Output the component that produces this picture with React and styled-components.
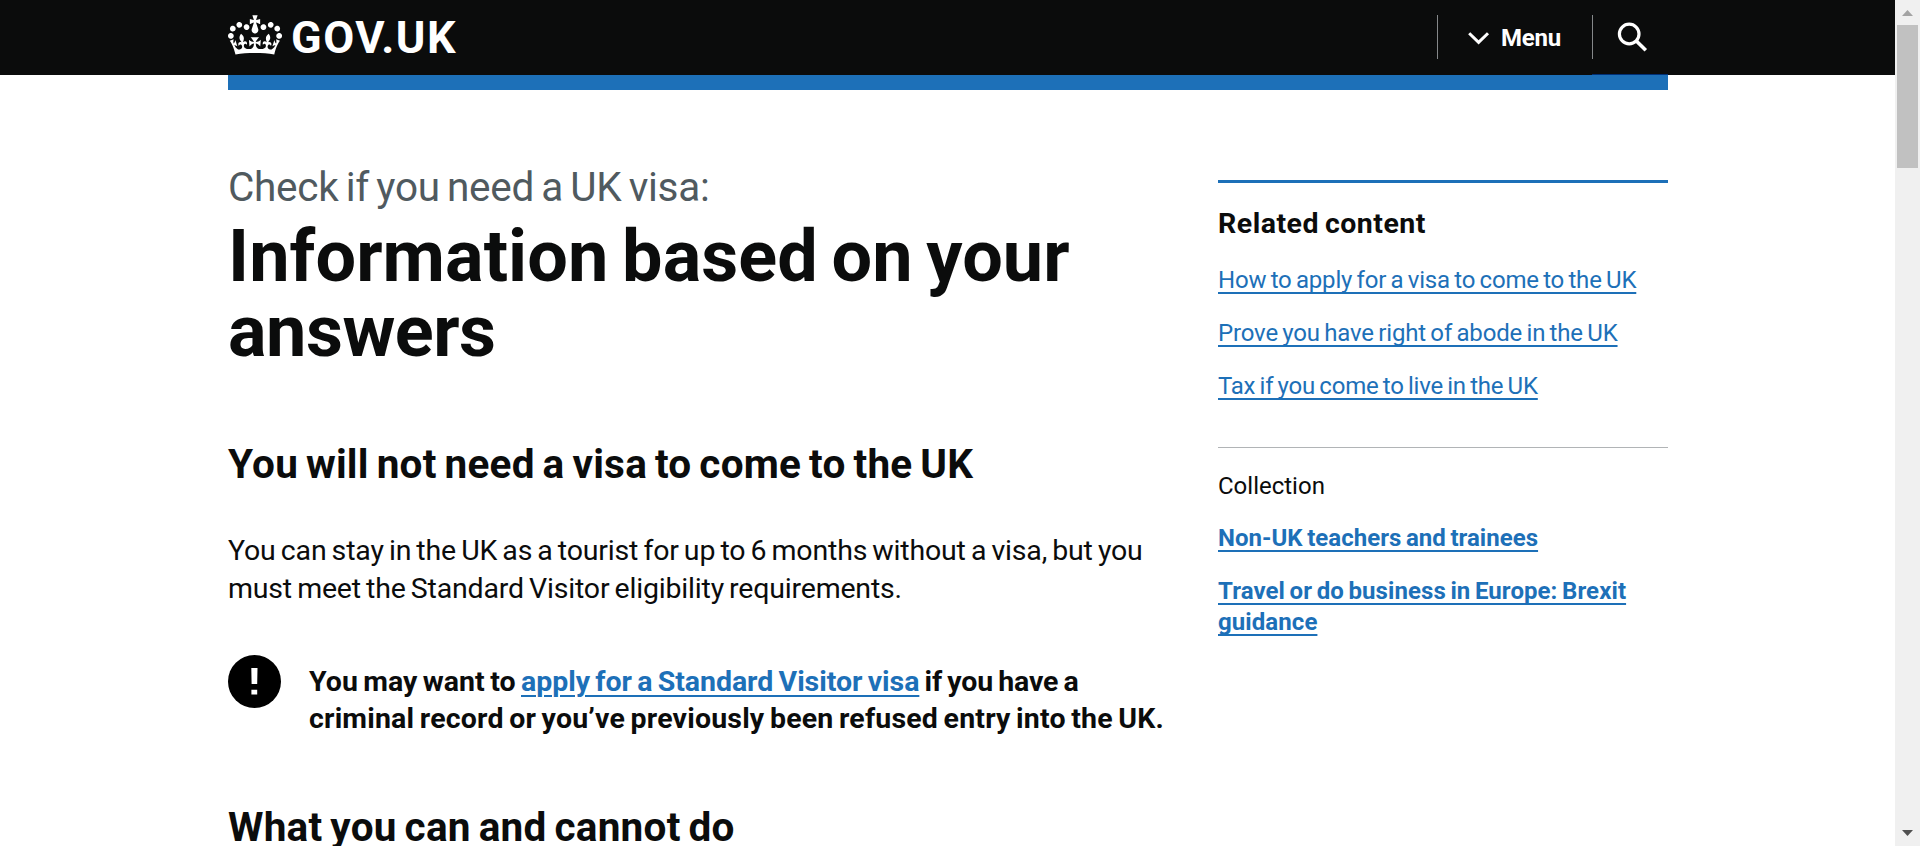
import React from 'react';
import styled, { createGlobalStyle } from 'styled-components';

const ink = '#0b0c0c';
const blue = '#1d70b8';

const GlobalStyle = createGlobalStyle`
  * { box-sizing: border-box; }
  body {
    margin: 0;
    background: #fff;
    color: ${ink};
    font-family: Roboto, "Liberation Sans", sans-serif;
    overflow: hidden;
  }
  h1, h2, p, ul { margin: 0; padding: 0; font-weight: inherit; word-spacing: -0.06em; }
`;

const Screen = styled.div`
  display: flex;
  height: 846px;
  overflow: hidden;
`;

const Page = styled.div`
  flex: 1;
  min-width: 0;
`;

const Container = styled.div`
  width: 1440px;
  margin-left: 228px;
`;

const Header = styled.header`
  height: 75px;
  background: ${ink};
  color: #fff;
`;

const HeaderRow = styled(Container)`
  display: flex;
  justify-content: space-between;
  height: 75px;
`;

const Brand = styled.a`
  display: flex;
  align-items: flex-start;
  gap: 9px;
  padding-top: 15px;
`;

const Crown = styled.svg`
  width: 54px;
  height: 40px;
  fill: #fff;
`;

const BrandName = styled.span`
  font-size: 45px;
  line-height: 46px;
  font-weight: 700;
  letter-spacing: 1.5px;
`;

const Nav = styled.nav`
  display: flex;
  padding-top: 15px;
`;

const NavButton = styled.div`
  display: flex;
  align-items: center;
  height: 44px;
  width: ${(p) => p.$width}px;
  padding-left: ${(p) => p.$pad}px;
  border-left: 1px solid #85888a;
`;

const MenuLabel = styled.span`
  margin-left: 11px;
  padding-top: 2px;
  font-size: 24px;
  line-height: 30px;
  font-weight: 700;
  letter-spacing: -0.2px;
`;

const SearchCell = styled.div`
  height: 60px;
  border-bottom: 1px solid #003078;
`;

const BlueBar = styled(Container)`
  height: 15px;
  background: ${blue};
`;

const Columns = styled(Container)`
  display: grid;
  grid-template-columns: 960px 450px;
  gap: 30px;
`;

const Main = styled.main`
  padding-top: 75px;
`;

const Line = styled.span`
  display: block;
  white-space: nowrap;
  letter-spacing: ${(p) => p.$track || 0}px;
`;

const Run = styled.span`
  letter-spacing: ${(p) => p.$track || 0}px;
`;

const Caption = styled.p`
  color: #505a5f;
  font-size: 40.5px;
  line-height: 45px;
`;

const Title = styled.h1`
  margin-top: 9px;
  font-size: 72px;
  line-height: 75px;
  font-weight: 700;
`;

const SectionHeading = styled.h2`
  margin-top: ${(p) => p.$gap}px;
  font-size: 40.5px;
  line-height: 45px;
  font-weight: 700;
`;

const Paragraph = styled.p`
  margin-top: 45px;
  font-size: 28.5px;
  line-height: 37.5px;
`;

const Warning = styled.div`
  display: flex;
  gap: 28px;
  margin-top: 48px;
`;

const WarningIcon = styled.svg`
  width: 53px;
  height: 53px;
  flex: none;
`;

const WarningText = styled.p`
  padding-top: 8px;
  font-size: 28.5px;
  line-height: 37px;
  font-weight: 700;
`;

const Link = styled.a`
  color: ${blue};
  letter-spacing: ${(p) => p.$track || 0}px;
  text-decoration: underline;
  text-decoration-thickness: 2px;
  text-underline-offset: 4px;
  text-decoration-skip-ink: ${(p) => (p.$solid ? 'none' : 'auto')};
`;

const Sidebar = styled.aside`
  align-self: start;
  margin-top: 90px;
  border-top: 3px solid ${blue};
`;

const RelatedHeading = styled.h2`
  margin-top: 22px;
  font-size: 28.5px;
  line-height: 38px;
  font-weight: 700;
  letter-spacing: 0.5px;
`;

const LinkList = styled.ul`
  display: flex;
  flex-direction: column;
  gap: 22px;
  margin-top: ${(p) => p.$gap}px;
  list-style: none;
  font-size: 24px;
  line-height: 31px;
  font-weight: ${(p) => (p.$bold ? 700 : 400)};
`;

const Collection = styled.section`
  margin-top: 45px;
  padding-top: 23px;
  border-top: 1px solid #b1b4b6;
`;

const CollectionLabel = styled.h2`
  font-size: 24px;
  line-height: 31px;
  font-weight: 400;
`;

const Scrollbar = styled.div`
  display: flex;
  flex-direction: column;
  align-items: center;
  width: 25px;
  background: #f0f0f0;
`;

const Thumb = styled.div`
  width: 21px;
  height: 143px;
  background: #c1c1c1;
`;

const ArrowCell = styled.svg`
  width: 25px;
  height: 25px;
  margin-top: ${(p) => (p.$bottom ? 'auto' : '0')};
  fill: ${(p) => (p.$bottom ? '#505050' : '#a3a3a3')};
`;

const related = [
  ['How to apply for a visa to come to the UK', -0.18],
  ['Prove you have right of abode in the UK', -0.16],
  ['Tax if you come to live in the UK', -0.22],
];

export default function App() {
  return (
    <>
      <GlobalStyle />
      <Screen>
        <Page>
          <Header>
            <HeaderRow>
              <Brand>
                <Crown viewBox="0 0 132 97">
                  <path d="M25 30.2c3.5 1.5 7.7-.2 9.1-3.7 1.5-3.6-.2-7.8-3.9-9.2-3.6-1.4-7.6.3-9.1 3.9-1.4 3.5.3 7.5 3.9 9zM9 39.5c3.6 1.5 7.8-.2 9.2-3.7 1.5-3.6-.2-7.8-3.9-9.1-3.6-1.5-7.6.2-9.1 3.8-1.4 3.5.3 7.5 3.8 9zM4.4 57.2c3.5 1.5 7.7-.2 9.1-3.8 1.5-3.6-.2-7.7-3.9-9.1-3.5-1.5-7.6.3-9.1 3.8-1.4 3.5.3 7.6 3.9 9.1zm38.3-21.4c3.5 1.5 7.7-.2 9.1-3.8 1.5-3.6-.2-7.7-3.9-9.1-3.6-1.5-7.6.3-9.1 3.8-1.3 3.6.4 7.7 3.9 9.1zm64.4-5.6c-3.6 1.5-7.8-.2-9.1-3.7-1.5-3.6.2-7.8 3.8-9.2 3.6-1.4 7.7.3 9.2 3.9 1.3 3.5-.4 7.5-3.9 9zm15.9 9.3c-3.6 1.5-7.7-.2-9.1-3.7-1.5-3.6.2-7.8 3.7-9.1 3.6-1.5 7.7.2 9.2 3.8 1.5 3.5-.3 7.5-3.8 9zm4.7 17.7c-3.6 1.5-7.8-.2-9.2-3.8-1.5-3.6.2-7.7 3.9-9.1 3.6-1.5 7.7.3 9.2 3.8 1.3 3.5-.4 7.6-3.9 9.1zM89.3 35.8c-3.6 1.5-7.8-.2-9.2-3.8-1.4-3.6.2-7.7 3.9-9.1 3.6-1.5 7.7.3 9.2 3.8 1.4 3.6-.3 7.7-3.9 9.1zM69.7 17.7l8.9 4.7V9.3l-8.9 2.8c-.2-.3-.5-.6-.9-.9L72.4 0H59.6l3.5 11.2c-.3.3-.6.5-.9.9l-8.8-2.8v13.1l8.8-4.7c.3.3.6.7.9.9l-5 15.4v.1c-.2.8-.4 1.6-.4 2.4 0 4.1 3.1 7.5 7 8.1h.2c.3 0 .7.1 1 .1.4 0 .7 0 1-.1h.2c4-.6 7.1-4.1 7.1-8.1 0-.8-.1-1.7-.4-2.4V34l-5.1-15.4c.4-.2.7-.6 1-.9zM66 92.8c16.9 0 32.8 1.1 47.1 3.2 4-16.9 8.9-26.7 14-33.5l-9.6-3.4c1 4.9 1.1 7.2 0 10.2-1.5-1.4-3-4.3-4.2-8.7L108.6 76c2.8-2 5-3.2 7.5-3.3-4.4 9.4-10 11.9-13.6 11.2-4.3-.8-6.3-4.6-5.6-7.9 1-4.7 5.7-5.9 8-.5 4.3-8.7-3-11.4-7.6-8.8 7.1-7.2 7.9-13.5 2.1-21.1-8 6.1-8.1 12.3-4.5 20.8-4.7-5.4-12.1-2.5-9.5 6.2 3.4-5.2 7.9-2 7.2 3.1-.6 4.3-6.4 7.8-13.5 7.2-10.3-.9-10.9-8-11.2-13.8 2.5-.5 7.1 1.8 11 7.3L80.2 60c-4.1 4.4-8 5.3-12.3 5.4 1.4-4.4 8-11.6 8-11.6H55.5s6.4 7.2 7.9 11.6c-4.2-.1-8-1-12.3-5.4l1.4 16.4c3.9-5.5 8.5-7.7 10.9-7.3-.3 5.8-.9 12.8-11.1 13.8-7.2.6-12.9-2.9-13.5-7.2-.7-5 3.8-8.3 7.1-3.1 2.7-8.7-4.6-11.6-9.4-6.2 3.7-8.5 3.6-14.7-4.6-20.8-5.8 7.6-5 13.9 2.2 21.1-4.7-2.6-11.9.1-7.7 8.8 2.3-5.5 7.1-4.2 8.1.5.7 3.3-1.3 7.1-5.7 7.9-3.5.7-9-1.8-13.5-11.2 2.5.1 4.7 1.3 7.5 3.3l-4.7-15.4c-1.2 4.4-2.7 7.2-4.3 8.7-1.1-3-.9-5.3 0-10.2l-9.5 3.4c5 6.9 9.9 16.7 14 33.5 14.8-2.1 30.8-3.2 47.7-3.2z" />
                </Crown>
                <BrandName>GOV.UK</BrandName>
              </Brand>
              <Nav>
                <NavButton $width={155} $pad={29}>
                  <svg width="23" height="18" viewBox="0 0 23 18" fill="none" stroke="#fff" strokeWidth="3">
                    <path d="M2.2 5.2l9.4 9.2 9.4-9.2" />
                  </svg>
                  <MenuLabel>Menu</MenuLabel>
                </NavButton>
                <SearchCell>
                  <NavButton $width={76} $pad={24}>
                    <svg width="32" height="32" viewBox="0 0 32 32" fill="none" stroke="#fff">
                      <circle cx="12.2" cy="13" r="9.8" strokeWidth="3.2" />
                      <path d="M18.6 19.2L28.8 29.2" strokeWidth="3.6" />
                    </svg>
                  </NavButton>
                </SearchCell>
              </Nav>
            </HeaderRow>
          </Header>
          <BlueBar />
          <Columns>
            <Main>
              <Caption>
                <Line $track={-0.3}>Check if you need a UK visa:</Line>
              </Caption>
              <Title>
                <Line $track={0.08}>Information based on your</Line>
                <Line $track={-0.5}>answers</Line>
              </Title>
              <SectionHeading $gap={73}>
                <Line $track={0.24}>You will not need a visa to come to the UK</Line>
              </SectionHeading>
              <Paragraph>
                <Line $track={-0.18}>
                  You can stay in the UK as a tourist for up to 6 months without a visa, but you
                </Line>
                <Line $track={-0.19}>must meet the Standard Visitor eligibility requirements.</Line>
              </Paragraph>
              <Warning>
                <WarningIcon viewBox="0 0 53 53">
                  <circle cx="26.5" cy="26.5" r="26.5" fill="#000" />
                  <path d="M23.3 13h6.2l-.3 16h-5.6zM23.4 34.8h5.8v4.8h-5.8z" fill="#fff" />
                </WarningIcon>
                <WarningText>
                  <Line>
                    <Run $track={0.03}>You may want to </Run>
                    <Link $track={-0.05}>apply for a Standard Visitor visa</Link>
                    <Run $track={-0.14}> if you have a</Run>
                  </Line>
                  <Line $track={0.18}>
                    criminal record or you’ve previously been refused entry into the UK.
                  </Line>
                </WarningText>
              </Warning>
              <SectionHeading $gap={68}>
                <Line $track={0.24}>What you can and cannot do</Line>
              </SectionHeading>
            </Main>
            <Sidebar>
              <RelatedHeading>Related content</RelatedHeading>
              <LinkList $gap={22}>
                {related.map(([label, track]) => (
                  <li key={label}>
                    <Link $solid $track={track}>{label}</Link>
                  </li>
                ))}
              </LinkList>
              <Collection>
                <CollectionLabel>Collection</CollectionLabel>
                <LinkList $bold $gap={21}>
                  <li>
                    <Link $solid $track={0.03}>Non-UK teachers and trainees</Link>
                  </li>
                  <li>
                    <Link $solid $track={0.08}>Travel or do business in Europe: Brexit guidance</Link>
                  </li>
                </LinkList>
              </Collection>
            </Sidebar>
          </Columns>
        </Page>
        <Scrollbar>
          <ArrowCell viewBox="0 0 25 25">
            <path d="M7 16h11l-5.5-6z" />
          </ArrowCell>
          <Thumb />
          <ArrowCell $bottom viewBox="0 0 25 25">
            <path d="M7 9h11l-5.5 6z" />
          </ArrowCell>
        </Scrollbar>
      </Screen>
    </>
  );
}
